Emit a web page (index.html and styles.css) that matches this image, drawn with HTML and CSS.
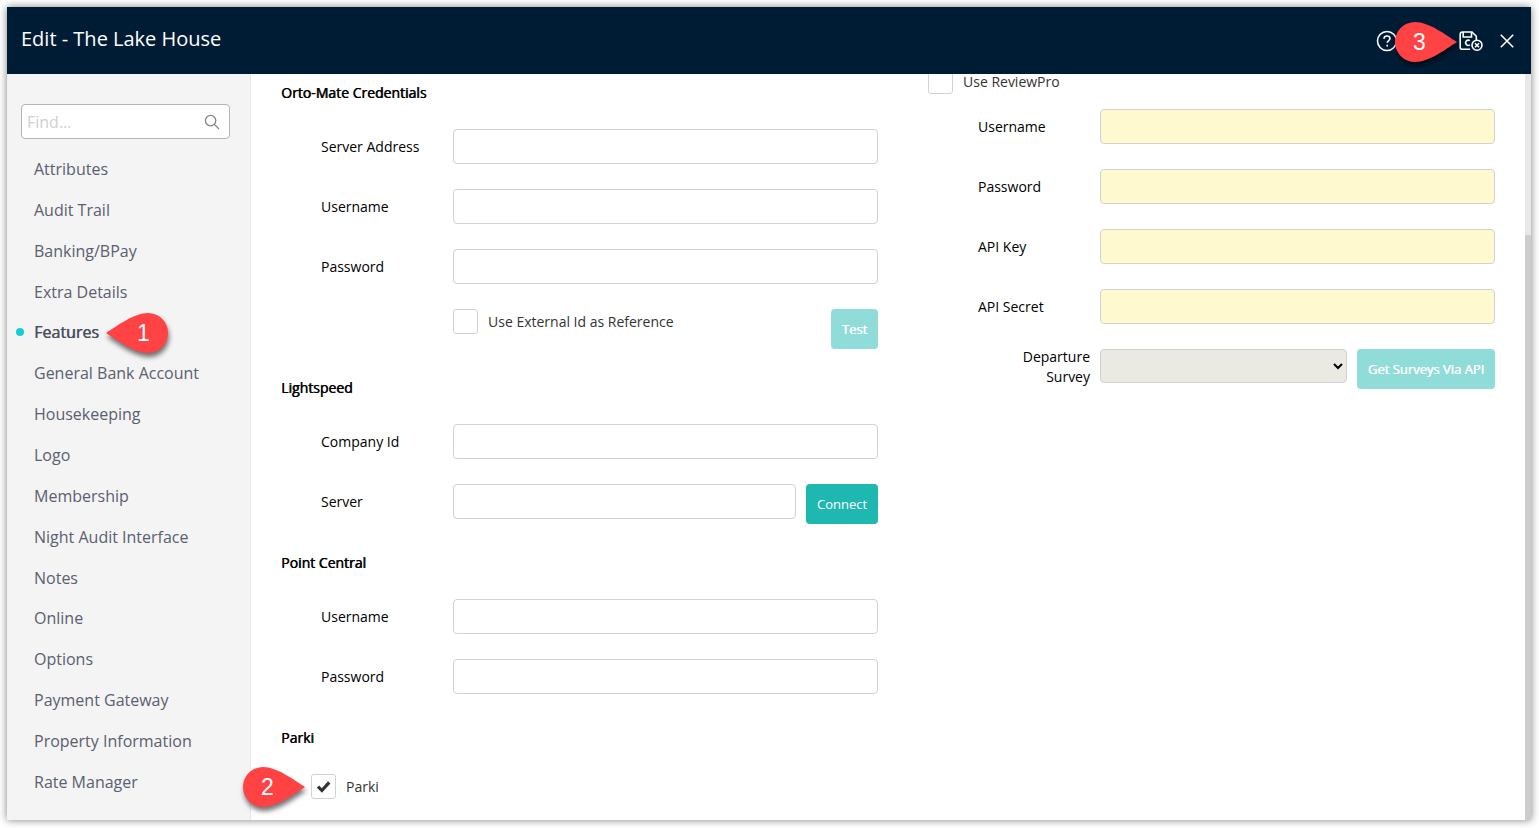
FILE: index.html
```html
<!DOCTYPE html>
<html lang="en">
<head>
  <meta charset="UTF-8" />
  <meta name="viewport" content="width=device-width, initial-scale=1.0"/>
  <title>Edit - The Lake House</title>
  <link rel="stylesheet" href="styles.css">
</head>
<body>
  <div class="window">
    <header class="titlebar">
      <h1>Edit - The Lake House</h1>
      <div class="actions">
        <svg class="icon-help" width="22" height="22" viewBox="0 0 22 22">
          <circle cx="11" cy="11" r="9.5" />
          <path d="M8 8.8C8 7 9.3 6 11 6s3 1 3 2.6c0 2-2.7 2.1-2.7 4.2" />
          <path d="M11.2 14.8v1.6" />
        </svg>
        <svg class="icon-save" width="26" height="22" viewBox="0 0 26 22">
          <path d="M12 19.2H4.2a2 2 0 0 1-2-2V4a2 2 0 0 1 2-2H14l4.3 4.3v4" />
          <path d="M5.2 2v5h8.3V2" />
          <path d="M11.8 10.7a2.6 2.6 0 1 0 0 4.2" />
          <circle cx="19" cy="15.2" r="5" />
          <path d="M17 13.2l4 4M21 13.2l-4 4" />
        </svg>
        <svg class="icon-close" width="16" height="16" viewBox="0 0 16 16">
          <path d="M1.8 1.8l12.4 12.4M14.2 1.8L1.8 14.2" />
        </svg>
      </div>
    </header>

    <div class="main">
      <aside class="sidebar">
        <div class="search">
          <input type="text" placeholder="Find..." />
          <svg width="16" height="16" viewBox="0 0 16 16">
            <circle cx="6.6" cy="6.6" r="5.2" />
            <path d="M10.4 10.4l4.6 4.6" />
          </svg>
        </div>
        <ul class="menu">
          <li>Attributes</li>
          <li>Audit Trail</li>
          <li>Banking/BPay</li>
          <li>Extra Details</li>
          <li class="active">Features</li>
          <li>General Bank Account</li>
          <li>Housekeeping</li>
          <li>Logo</li>
          <li>Membership</li>
          <li>Night Audit Interface</li>
          <li>Notes</li>
          <li>Online</li>
          <li>Options</li>
          <li>Payment Gateway</li>
          <li>Property Information</li>
          <li>Rate Manager</li>
        </ul>
      </aside>

      <div class="content">
        <section class="col-left">
          <h2>Orto-Mate Credentials</h2>
          <div class="row"><label>Server Address</label><input type="text" /></div>
          <div class="row"><label>Username</label><input type="text" /></div>
          <div class="row"><label>Password</label><input type="text" /></div>
          <div class="row">
            <label></label>
            <span class="check"></span><span class="check-label">Use External Id as Reference</span>
            <button class="btn btn-test" disabled>Test</button>
          </div>

          <h2>Lightspeed</h2>
          <div class="row"><label>Company Id</label><input type="text" /></div>
          <div class="row"><label>Server</label><input type="text" /><button class="btn btn-connect">Connect</button></div>

          <h2>Point Central</h2>
          <div class="row"><label>Username</label><input type="text" /></div>
          <div class="row"><label>Password</label><input type="text" /></div>

          <h2>Parki</h2>
          <div class="row row-parki">
            <span class="check">
              <svg width="16" height="14" viewBox="0 0 16 14"><path d="M.8 7.8L3.2 5.6 5.8 8.2 12 1.2 14.4 3.4 6 12.8z" /></svg>
            </span>
            <span class="check-label">Parki</span>
          </div>
        </section>

        <section class="col-right">
          <div class="row row-review"><span class="check"></span><span class="check-label">Use ReviewPro</span></div>
          <div class="row"><label>Username</label><input type="text" class="required" /></div>
          <div class="row"><label>Password</label><input type="text" class="required" /></div>
          <div class="row"><label>API Key</label><input type="text" class="required" /></div>
          <div class="row"><label>API Secret</label><input type="text" class="required" /></div>
          <div class="row">
            <label class="label-right">Departure Survey</label>
            <select></select>
            <button class="btn btn-surveys" disabled>Get Surveys Via API</button>
          </div>
        </section>
      </div>
      <div class="scrollbar"><div class="thumb"></div></div>
    </div>
  </div>

  <!-- Step callouts -->
  <svg class="pin pin-1" width="72" height="54" viewBox="0 0 72 54">
    <path d="M4 25C15 18 32 5 46 5a20 20 0 0 1 0 40C32 45 15 32 4 25z" />
    <text x="41.5" y="33">1</text>
  </svg>
  <svg class="pin pin-2" width="72" height="54" viewBox="0 0 72 54">
    <path d="M67 25C56 18 39 5 25 5a20 20 0 0 0 0 40C39 45 56 32 67 25z" />
    <text x="29.5" y="33">2</text>
  </svg>
  <svg class="pin pin-3" width="72" height="54" viewBox="0 0 72 54">
    <path d="M67 25C56 18 39 5 25 5a20 20 0 0 0 0 40C39 45 56 32 67 25z" />
    <text x="29.5" y="33">3</text>
  </svg>
</body>
</html>
```

FILE: styles.css
```css
:root {
  --navy: #001c35;
  --teal: #1fb8b1;
  --teal-off: #8fdcd8;
  --border: #d2d2d2;
  --pin: #ff4244;
}
*{box-sizing:border-box;margin:0;padding:0;}
body{height:828px;padding:7px 8px 8px 7px;overflow:hidden;position:relative;background:#fff;font-family:'Open Sans',sans-serif;font-size:14px;line-height:20px;color:#000;}
svg{display:block;fill:none;}
.window{height:813px;display:flex;flex-direction:column;background:#fff;box-shadow:0 0 8px rgba(0,0,0,.5);}

.titlebar{height:67px;flex:none;display:flex;justify-content:space-between;padding:0 16.5px 0 14px;background:var(--navy);color:#fff;}
.titlebar h1{font-size:20px;font-weight:400;line-height:64px;}
.actions{display:flex;align-items:center;padding-top:1px;}
.actions svg{stroke:#fff;stroke-width:1.6;}
.icon-save{margin-left:60px;}
.icon-close{margin-left:14.5px;}

.main{flex:1;min-height:0;display:flex;}
.sidebar{width:244px;flex:none;padding:30px 14px 0;background:#f4f4f4;border-right:1px solid #e8e8e8;}
.search{width:209px;height:35px;display:flex;align-items:center;padding:0 9px 0 5px;background:#fff;border:1px solid #b4b4b4;border-radius:4px;}
.search input{flex:1;min-width:0;border:none;outline:none;font:16px 'Open Sans',sans-serif;background:none;}
.search input::placeholder{color:#d0d0d0;}
.search svg{stroke:#858585;stroke-width:1.3;}
.menu{list-style:none;margin-top:10px;}
.menu li{height:40.87px;padding-left:13px;line-height:40px;font-size:16px;color:#5a6070;white-space:nowrap;}
.menu li.active{display:flex;align-items:center;gap:10px;margin-left:-5px;padding:0 0 2px;color:#4b5060;text-shadow:.6px 0 #4b5060;}
.menu li.active::before{content:"";width:8px;height:8px;border-radius:50%;background:#1bcbd3;}

.content{flex:1;display:flex;overflow:hidden;padding-right:30px;}
.col-left{width:597px;flex:none;margin-left:30px;}
.col-right{width:567px;flex:none;margin:-5px 0 0 50px;}
h2{height:55px;padding-top:9px;font-size:14px;font-weight:400;line-height:20px;text-shadow:.6px 0 #000;}
.row{height:60px;display:flex;align-items:flex-start;}
.row label{width:132px;margin-left:40px;padding-top:8px;flex:none;}
.row input,.row select{flex:1;min-width:0;height:35px;border:1px solid var(--border);border-radius:4px;background:#fff;}
.col-right .row label{width:122px;margin-left:50px;}
.col-right .row .label-right{padding:0 10px 0 30px;margin-top:-2px;text-align:right;}
.row input.required{background:#fff9d0;}
.row select{height:34px;background:#eaeae2;}
.check{width:25px;height:25px;flex:none;display:flex;align-items:center;justify-content:center;border:1px solid var(--border);border-radius:3px;background:#fff;}
.check svg{fill:#333;}
.check-label{margin-left:10px;padding-top:5px;line-height:16px;color:#333;}
.row-parki{padding-left:30px;}
.row-review{height:40px;}
.btn{height:40px;flex:none;margin-left:10px;border:none;border-radius:4px;background:var(--teal);color:#fff;font:13px 'Open Sans',sans-serif;}
.btn:disabled{background:var(--teal-off);text-shadow:.4px 0 #fff;}
.btn-test{width:47px;margin-left:auto;}
.btn-connect{width:72px;}
.btn-surveys{width:138px;}

.scrollbar{width:6px;flex:none;background:#cdcdcd;}
.thumb{height:161px;background:#e8e8e8;}

/* Pins */
.pin{position:absolute;}
.pin path{fill:var(--pin);filter:drop-shadow(1px 4px 2.5px rgba(0,0,0,.55));}
.pin text{fill:#fff;font:23px 'Liberation Sans',sans-serif;text-anchor:middle;}
.pin-1{left:102px;top:308px;}
.pin-2{left:238px;top:762px;}
.pin-3{left:1390px;top:17px;}
```
